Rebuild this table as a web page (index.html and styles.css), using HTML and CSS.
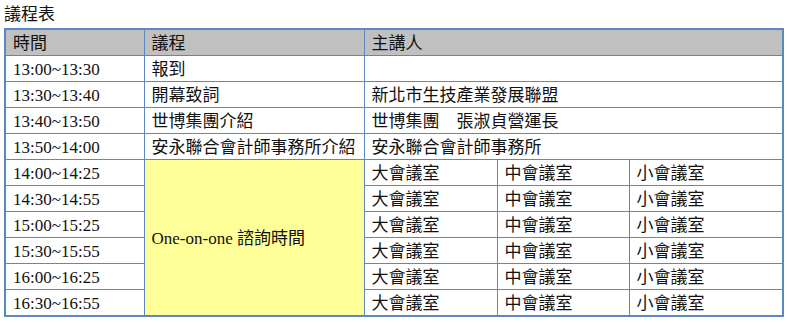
FILE: index.html
```html
<!DOCTYPE html>
<html lang="zh-Hant">
<head>
<meta charset="utf-8">
<title>議程表</title>
<link rel="stylesheet" href="styles.css">
</head>
<body>
<div class="wrap">
  <div class="title">議程表</div>
  <table class="agenda">
    <colgroup>
      <col class="c1"><col class="c2"><col class="c3"><col class="c4"><col class="c5">
    </colgroup>
    <thead>
      <tr class="head"><td>時間</td><td>議程</td><td colspan="3">主講人</td></tr>
    </thead>
    <tbody>
      <tr><td>13:00~13:30</td><td>報到</td><td colspan="3"></td></tr>
      <tr><td>13:30~13:40</td><td>開幕致詞</td><td colspan="3">新北市生技產業發展聯盟</td></tr>
      <tr><td>13:40~13:50</td><td>世博集團介紹</td><td colspan="3">世博集團　張淑貞營運長</td></tr>
      <tr><td>13:50~14:00</td><td>安永聯合會計師事務所介紹</td><td colspan="3">安永聯合會計師事務所</td></tr>
      <tr><td>14:00~14:25</td><td class="consult" rowspan="6">One-on-one 諮詢時間</td><td>大會議室</td><td>中會議室</td><td>小會議室</td></tr>
      <tr><td>14:30~14:55</td><td>大會議室</td><td>中會議室</td><td>小會議室</td></tr>
      <tr><td>15:00~15:25</td><td>大會議室</td><td>中會議室</td><td>小會議室</td></tr>
      <tr><td>15:30~15:55</td><td>大會議室</td><td>中會議室</td><td>小會議室</td></tr>
      <tr><td>16:00~16:25</td><td>大會議室</td><td>中會議室</td><td>小會議室</td></tr>
      <tr><td>16:30~16:55</td><td>大會議室</td><td>中會議室</td><td>小會議室</td></tr>
    </tbody>
  </table>
</div>
</body>
</html>
```

FILE: styles.css
```css
html, body {
  margin: 0;
  padding: 0;
  background: #ffffff;
}

body {
  font-family: "Liberation Serif", "Noto Sans CJK TC", serif;
  font-size: 17px;
  color: #111111;
}

.wrap {
  padding: 4px 0 0 4px;
}

.title {
  font-size: 17px;
  line-height: 22px;
  margin-bottom: 2px;
}

.agenda {
  border-collapse: collapse;
  table-layout: fixed;
  width: 778px;
  border: 2px solid #5b87c2;
}

.agenda .c1 { width: 139px; }
.agenda .c2 { width: 220px; }
.agenda .c3 { width: 133px; }
.agenda .c4 { width: 132px; }
.agenda .c5 { width: 154px; }

.agenda td {
  border: 1px solid #5b87c2;
  padding: 2px 7px 0;
  line-height: 23px;
  height: 23px;
  white-space: nowrap;
  vertical-align: middle;
  text-align: left;
}

.agenda .head td {
  background: #c0c0c0;
}

.agenda .consult {
  background: #ffff99;
}
```
